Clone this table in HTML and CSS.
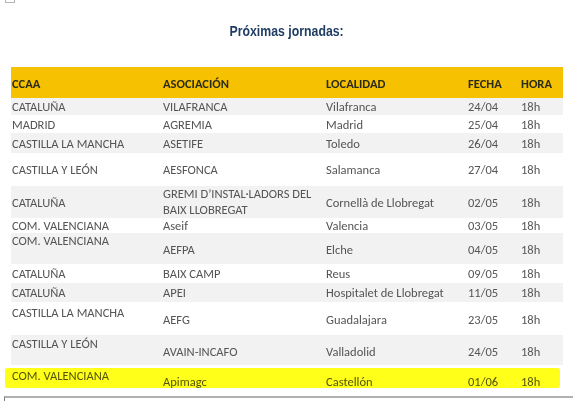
FILE: index.html
```html
<!DOCTYPE html>
<html lang="es">
<head>
<meta charset="utf-8">
<title>Próximas jornadas</title>
<link rel="stylesheet" href="styles.css">
</head>
<body>
<div class="topbox"></div>
<h1 class="title"><span class="title-text">Próximas jornadas:</span></h1>
<div class="tablewrap">
  <table class="jornadas">
    <colgroup>
      <col class="c1"><col class="c2"><col class="c3"><col class="c4"><col class="c5">
    </colgroup>
    <thead>
      <tr class="head">
        <th class="first">CCAA</th><th>ASOCIACIÓN</th><th>LOCALIDAD</th><th>FECHA</th><th>HORA</th>
      </tr>
    </thead>
    <tbody>
      <tr class="alt r17"><td class="first">CATALUÑA</td><td>VILAFRANCA</td><td>Vilafranca</td><td>24/04</td><td>18h</td></tr>
      <tr class="r18"><td class="first">MADRID</td><td>AGREMIA</td><td>Madrid</td><td>25/04</td><td>18h</td></tr>
      <tr class="alt r20"><td class="first">CASTILLA LA MANCHA</td><td>ASETIFE</td><td>Toledo</td><td>26/04</td><td>18h</td></tr>
      <tr class="r33"><td class="first">CASTILLA Y LEÓN</td><td>AESFONCA</td><td>Salamanca</td><td>27/04</td><td>18h</td></tr>
      <tr class="alt r32"><td class="first">CATALUÑA</td><td class="two">GREMI D’INSTAL·LADORS DEL BAIX LLOBREGAT</td><td>Cornellà de Llobregat</td><td>02/05</td><td>18h</td></tr>
      <tr class="r15"><td class="first">COM. VALENCIANA</td><td>Aseif</td><td>Valencia</td><td>03/05</td><td>18h</td></tr>
      <tr class="alt r31 split"><td class="first top">COM. VALENCIANA</td><td>AEFPA</td><td>Elche</td><td>04/05</td><td>18h</td></tr>
      <tr class="r19"><td class="first">CATALUÑA</td><td>BAIX CAMP</td><td>Reus</td><td>09/05</td><td>18h</td></tr>
      <tr class="alt r19"><td class="first">CATALUÑA</td><td>APEI</td><td>Hospitalet de Llobregat</td><td>11/05</td><td>18h</td></tr>
      <tr class="r33 split"><td class="first top t3">CASTILLA LA MANCHA</td><td>AEFG</td><td>Guadalajara</td><td>23/05</td><td>18h</td></tr>
      <tr class="alt r30 split"><td class="first top t1">CASTILLA Y LEÓN</td><td>AVAIN-INCAFO</td><td>Valladolid</td><td>24/05</td><td>18h</td></tr>
      <tr class="r31 split last"><td class="first top t3">COM. VALENCIANA</td><td>Apimagc</td><td>Castellón</td><td>01/06</td><td>18h</td></tr>
    </tbody>
  </table>
  <div class="highlight"></div>
</div>
<div class="rule"></div>
</body>
</html>
```

FILE: styles.css
```css
html, body {
  margin: 0;
  padding: 0;
  background: #ffffff;
}

body {
  width: 573px;
  height: 401px;
  overflow: hidden;
}

.topbox {
  margin-left: 5px;
  width: 8px;
  height: 2px;
  border: 1px solid #b4b4b4;
  border-top: none;
}

.title {
  margin: 19px 0 0 0;
  text-align: center;
  font-family: "Liberation Sans", Arial, sans-serif;
  font-weight: bold;
  font-size: 15px;
  line-height: 18px;
  color: #1f3d63;
}

.title-text {
  display: inline-block;
  transform: scaleX(0.82);
}

.tablewrap {
  position: relative;
  margin-top: 27px;
}

.jornadas {
  margin-left: 11px;
  width: 552px;
  table-layout: fixed;
  border-collapse: collapse;
  border-spacing: 0;
  font-family: Carlito, Lato, "Liberation Sans", sans-serif;
  font-size: 12.5px;
  line-height: 15px;
  color: #555555;
}

.c1 { width: 150px; }
.c2 { width: 163px; }
.c3 { width: 142px; }
.c4 { width: 53px; }
.c5 { width: 44px; }

.jornadas th,
.jornadas td {
  padding: 0 0 0 2px;
  text-align: left;
  vertical-align: middle;
  white-space: nowrap;
  overflow: visible;
}

.jornadas th.first,
.jornadas td.first {
  padding-left: 1px;
}

.head {
  height: 31px;
  background: #f5c100;
}

.head th {
  font-weight: 900;
  color: #2b2b1a;
  padding-top: 1px;
}

.alt { background: #f2f2f2; }

.r15 { height: 15px; }
.r17 { height: 17px; }
.r18 { height: 18px; }
.r19 { height: 19px; }
.r20 { height: 20px; }
.r30 { height: 30px; }
.r31 { height: 31px; }
.r32 { height: 32px; }
.r33 { height: 33px; }

.jornadas td.two {
  white-space: normal;
  line-height: 16px;
}

.split td {
  padding-top: 2px;
}

.jornadas td.top {
  vertical-align: top;
  padding-top: 0;
}

.jornadas td.t1 { padding-top: 1px; }
.jornadas td.t3 { padding-top: 3px; }

.highlight {
  position: absolute;
  left: 5px;
  top: 301px;
  width: 555px;
  height: 20px;
  background: #ffff1a;
  mix-blend-mode: multiply;
  border-radius: 2px 3px 3px 2px;
}

.rule {
  margin-left: 4px;
  height: 3px;
  border-top: 2px solid #b0b0b0;
  border-left: 1px solid #7a7a7a;
}
```
